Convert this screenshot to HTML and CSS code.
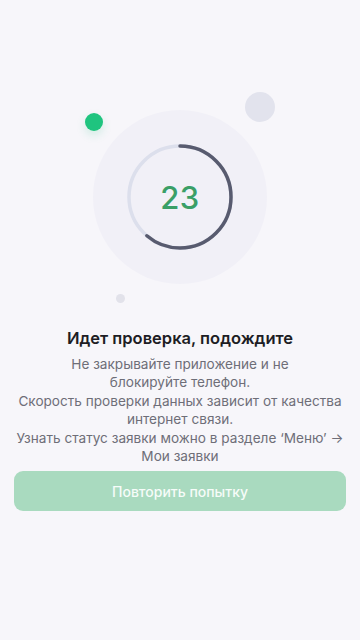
FILE: index.html
```html
<!DOCTYPE html>
<html lang="ru">
<head>
<meta charset="utf-8">
<link rel="stylesheet" href="styles.css">
</head>
<body>
<main class="screen">
  <div class="visual">
    <span class="dot dot-green"></span>
    <span class="dot dot-gray"></span>
    <span class="dot dot-small"></span>
    <div class="halo">
      <div class="timer">
        <svg class="ring" viewBox="0 0 108 108" width="108" height="108">
          <circle cx="54" cy="54" r="51" fill="none" stroke="#dcdfec" stroke-width="3.5"/>
          <circle cx="54" cy="54" r="51" fill="none" stroke="#585b6f" stroke-width="3.5" stroke-linecap="round"
            stroke-dasharray="196 400" transform="rotate(-90 54 54)"/>
        </svg>
        <span class="count">23</span>
      </div>
    </div>
  </div>
  <h1 class="title">Идет проверка, подождите</h1>
  <p class="text">Не закрывайте приложение и не<br>блокируйте телефон.<br>Скорость проверки данных зависит от качества<br>интернет связи.<br>Узнать статус заявки можно в разделе ‘Меню’ →<br>Мои заявки</p>
  <button class="retry" type="button">Повторить попытку</button>
</main>
</body>
</html>
```
FILE: styles.css
```css
* { box-sizing: border-box; }
html, body { margin: 0; padding: 0; }
body {
  background: #f7f6fa;
  font-family: Inter, "Noto Sans", sans-serif;
  width: 360px;
  height: 640px;
  overflow: hidden;
}
.screen {
  display: flex;
  flex-direction: column;
  align-items: center;
  padding: 0 14px;
}
.visual {
  position: relative;
  width: 360px;
  height: 318px;
  display: flex;
  justify-content: center;
  padding-top: 110px;
}
.halo {
  width: 174px;
  height: 174px;
  border-radius: 50%;
  background: #f1f0f7;
  display: flex;
  align-items: center;
  justify-content: center;
}
.timer {
  position: relative;
  width: 108px;
  height: 108px;
  display: flex;
  align-items: center;
  justify-content: center;
}
.ring { position: absolute; left: 0; top: 0; }
.count {
  font-size: 31px;
  font-weight: 500;
  color: #3a9f67;
  letter-spacing: 0.5px;
}
.dot { position: absolute; border-radius: 50%; }
.dot-green {
  left: 85px; top: 113px;
  width: 18px; height: 18px;
  background: #1fc47f;
  box-shadow: 0 4px 10px rgba(31,196,127,0.18);
}
.dot-gray {
  left: 245px; top: 92px;
  width: 30px; height: 30px;
  background: #e2e3ed;
}
.dot-small {
  left: 116px; top: 294px;
  width: 9px; height: 9px;
  background: #e2e2ea;
}
.title {
  margin: 9px 0 0;
  font-size: 16.5px;
  font-weight: 600;
  color: #1d1d24;
  text-align: center;
  line-height: 22px;
}
.text {
  margin: 6px 0 0;
  font-size: 13.6px;
  line-height: 18.4px;
  color: #6e6e78;
  text-align: center;
}
.retry {
  margin-top: 6px;
  width: 332px;
  height: 40px;
  border: none;
  border-radius: 9px;
  background: #a9dabf;
  color: #f6fcf9;
  font-family: Inter, "Noto Sans", sans-serif;
  font-size: 14px;
  font-weight: 500;
}
```
